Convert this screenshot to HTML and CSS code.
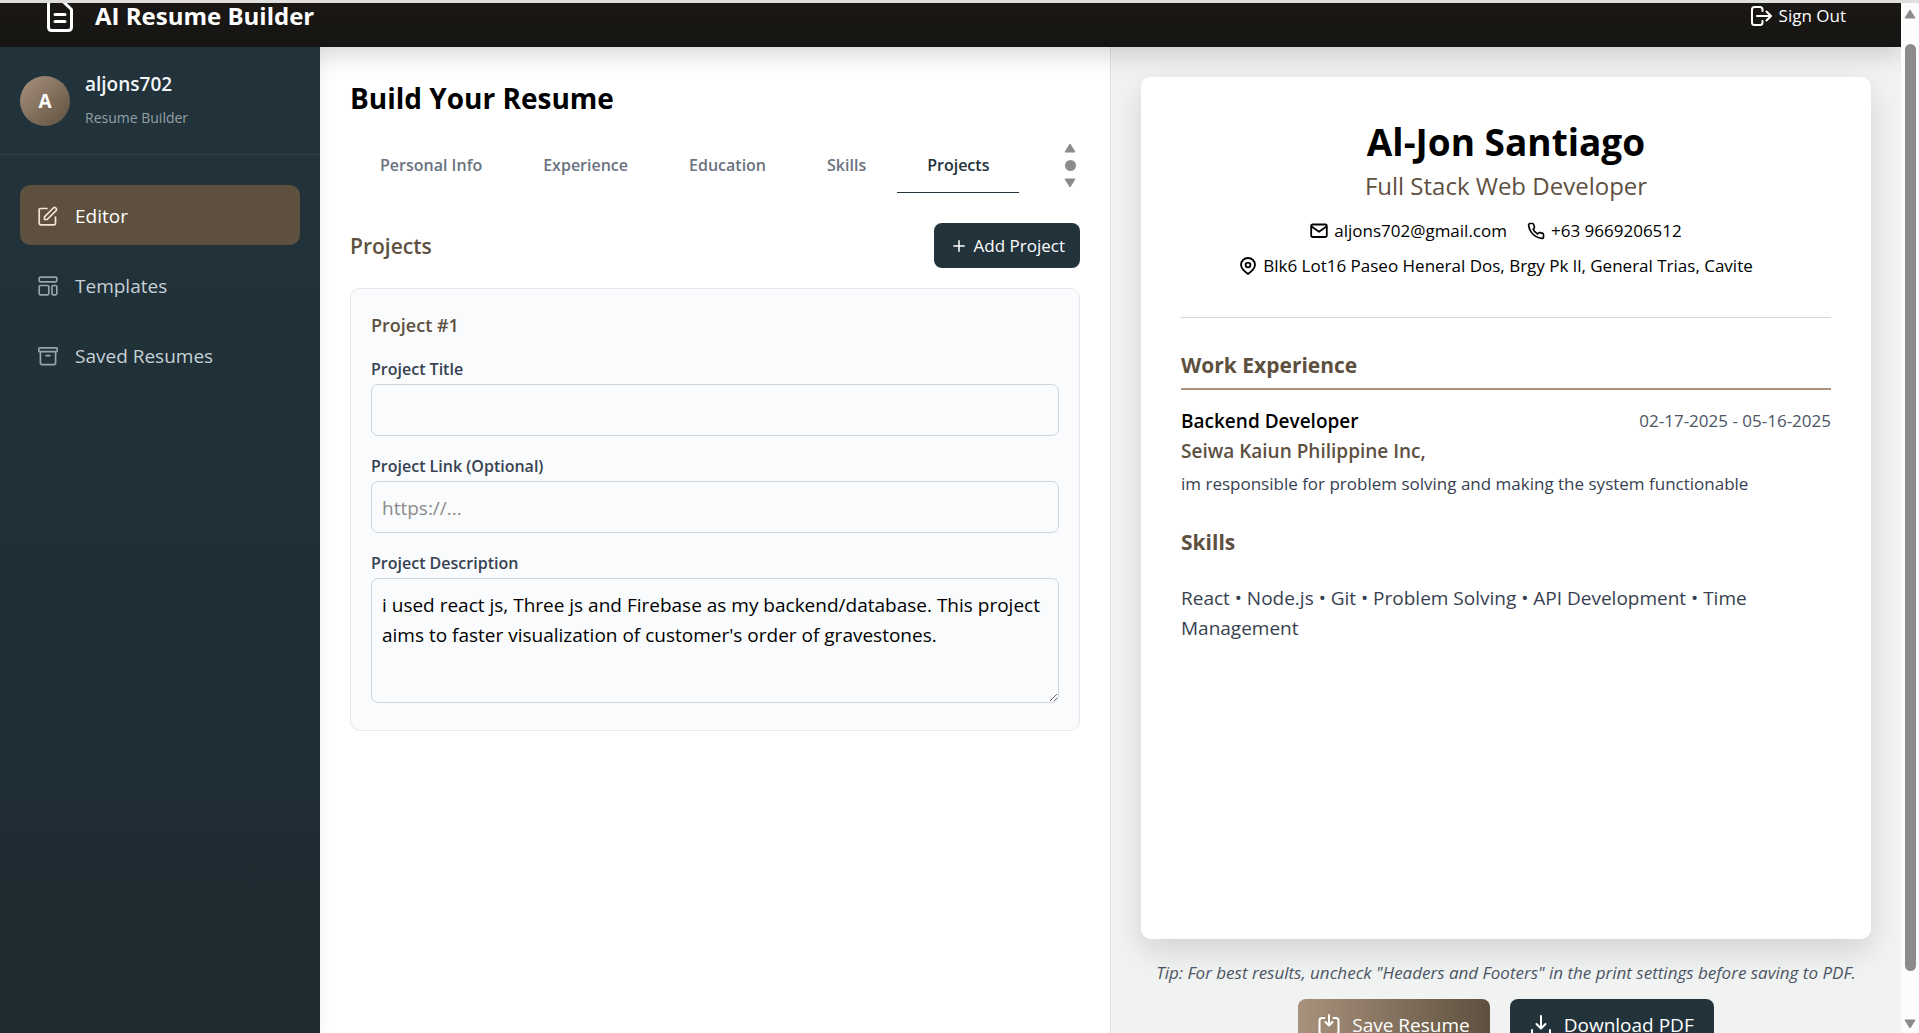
FILE: index.html
```html
<!DOCTYPE html>
<html lang="en">
<head>
<meta charset="utf-8">
<meta name="viewport" content="width=device-width, initial-scale=1">
<title>AI Resume Builder</title>
<link rel="stylesheet" href="styles.css">
</head>
<body>
<div class="window">
  <div class="app">
    <header class="topbar">
      <div class="brand">
        <svg class="brand-icon" viewBox="0 0 28 36" fill="none" stroke="currentColor" stroke-width="3" stroke-linecap="round" stroke-linejoin="round"><path d="M5 3H16.500L25.500 11.500V29Q25.500 32.500 22 32.500H5.500Q2.500 32.500 2.500 29V6Q2.500 3 5 3Z"/><path d="M9 16.500H19M9 23.500H19"/></svg>
        <span class="brand-name">AI Resume Builder</span>
      </div>
      <button class="signout" type="button">
        <svg class="icon-md" viewBox="0 0 22 22" fill="none" stroke="currentColor" stroke-width="2" stroke-linecap="round" stroke-linejoin="round"><path d="M12.500 6V4.500Q12.500 2 10 2H4.500Q2 2 2 4.500V17.500Q2 20 4.500 20H10Q12.500 20 12.500 17.500V16"/><path d="M7 11H20.500M16.500 6.500L21 11L16.500 15.500"/></svg>
        Sign Out
      </button>
    </header>

    <div class="workspace">
      <aside class="sidebar">
        <div class="profile">
          <div class="avatar">A</div>
          <div class="profile-text">
            <span class="profile-name">aljons702</span>
            <span class="profile-role">Resume Builder</span>
          </div>
        </div>
        <nav class="nav">
          <a class="nav-item active" href="#editor">
            <svg class="icon-md" viewBox="0 0 20 20" fill="none" stroke="currentColor" stroke-width="1.700" stroke-linecap="round" stroke-linejoin="round"><path d="M9 2.500H2.500Q1.200 2.500 1.200 4V17Q1.200 18.800 3 18.800H16Q17.500 18.800 17.500 17V11"/><path d="M6.500 13.500V10.800L15.300 2Q16.500 .8 17.800 2Q19.200 3.300 18 4.600L9.200 13.500Z"/></svg>
            Editor
          </a>
          <a class="nav-item" href="#templates">
            <svg class="icon-md" viewBox="0 0 20 20" fill="none" stroke="currentColor" stroke-width="1.700" stroke-linejoin="round"><rect x="1.200" y="1.200" width="17.600" height="4.600" rx="1.200"/><rect x="1.200" y="9.500" width="9.600" height="9.300" rx="1.200"/><rect x="14" y="9.500" width="4.800" height="9.300" rx="1.200"/></svg>
            Templates
          </a>
          <a class="nav-item" href="#saved">
            <svg class="icon-md" viewBox="0 0 20 20" fill="none" stroke="currentColor" stroke-width="1.700" stroke-linecap="round" stroke-linejoin="round"><rect x=".8" y="1.800" width="18.400" height="3.800" rx="1"/><path d="M2.400 5.600V17Q2.400 18.600 4 18.600H16Q17.600 18.600 17.600 17V5.600M8 9.600H12"/></svg>
            Saved Resumes
          </a>
        </nav>
      </aside>

      <main class="editor">
        <h1 class="editor-title">Build Your Resume</h1>
        <div class="tabs-row">
          <div class="tabs" role="tablist">
            <button class="tab" type="button" role="tab">Personal Info</button>
            <button class="tab" type="button" role="tab">Experience</button>
            <button class="tab" type="button" role="tab">Education</button>
            <button class="tab" type="button" role="tab">Skills</button>
            <button class="tab selected" type="button" role="tab" aria-selected="true">Projects</button>
          </div>
          <div class="mini-scroll">
            <svg class="arrow" viewBox="0 0 12 10"><path d="M6 1L11 9H1Z"/></svg>
            <span class="mini-thumb"></span>
            <svg class="arrow" viewBox="0 0 12 10"><path d="M6 9L11 1H1Z"/></svg>
          </div>
        </div>
        <div class="section-head">
          <h2 class="section-title">Projects</h2>
          <button class="btn btn-add" type="button">
            <svg class="icon-plus" viewBox="0 0 12 12" fill="none" stroke="currentColor" stroke-width="1.500" stroke-linecap="round"><path d="M6 .8V11.200M.8 6H11.200"/></svg>
            Add Project
          </button>
        </div>
        <form class="project">
          <h3 class="project-title">Project #1</h3>
          <div class="field">
            <label for="title">Project Title</label>
            <input id="title" type="text">
          </div>
          <div class="field">
            <label for="link">Project Link (Optional)</label>
            <input id="link" type="text" placeholder="https://...">
          </div>
          <div class="field">
            <label for="description">Project Description</label>
            <textarea id="description">i used react js, Three js and Firebase as my backend/database. This project aims to faster visualization of customer's order of gravestones.</textarea>
          </div>
        </form>
      </main>

      <section class="preview">
        <article class="resume">
          <header class="resume-head">
            <h2 class="resume-name">Al-Jon Santiago</h2>
            <p class="resume-role">Full Stack Web Developer</p>
            <ul class="contacts">
              <li><svg class="icon-sm" viewBox="0 0 18 18" fill="none" stroke="currentColor" stroke-width="1.800" stroke-linecap="round" stroke-linejoin="round"><rect x="1.200" y="2.500" width="15.600" height="12.500" rx="1.500"/><path d="M1.500 4.500L9 9.800L16.500 4.500"/></svg>aljons702@gmail.com</li>
              <li><svg class="icon-sm" viewBox="0 0 24 24" fill="none" stroke="currentColor" stroke-width="2.200" stroke-linecap="round" stroke-linejoin="round"><path d="M22 16.920v3a2 2 0 0 1-2.180 2 19.790 19.790 0 0 1-8.630-3.070 19.500 19.500 0 0 1-6-6 19.790 19.790 0 0 1-3.070-8.670A2 2 0 0 1 4.110 2h3a2 2 0 0 1 2 1.720c.13.96.36 1.900.7 2.810a2 2 0 0 1-.45 2.110L8.090 9.910a16 16 0 0 0 6 6l1.270-1.270a2 2 0 0 1 2.110-.45c.91.34 1.850.57 2.810.7A2 2 0 0 1 22 16.920z"/></svg>+63 9669206512</li>
              <li><svg class="icon-sm" viewBox="0 0 18 18" fill="none" stroke="currentColor" stroke-width="1.800" stroke-linejoin="round"><path d="M9 17C5.500 14.500 2 11.500 2 7.800A7 6.800 0 0 1 16 7.800C16 11.500 12.500 14.500 9 17Z"/><circle cx="9" cy="8" r="2.400"/></svg>Blk6 Lot16 Paseo Heneral Dos, Brgy Pk ll, General Trias, Cavite</li>
            </ul>
          </header>
          <section class="work">
            <h3 class="resume-heading ruled">Work Experience</h3>
            <div class="job-line">
              <h4 class="job-title">Backend Developer</h4>
              <span class="job-dates">02-17-2025 - 05-16-2025</span>
            </div>
            <p class="job-company">Seiwa Kaiun Philippine Inc,</p>
            <p class="job-text">im responsible for problem solving and making the system functionable</p>
          </section>
          <section>
            <h3 class="resume-heading">Skills</h3>
            <p class="skills">React • Node.js • Git • Problem Solving • API Development • Time Management</p>
          </section>
        </article>
        <p class="tip">Tip: For best results, uncheck "Headers and Footers" in the print settings before saving to PDF.</p>
        <div class="actions">
          <button class="btn btn-save" type="button">
            <svg class="icon-lg" viewBox="0 0 22 22" fill="none" stroke="currentColor" stroke-width="2" stroke-linecap="round" stroke-linejoin="round"><path d="M6.500 4H4Q1.500 4 1.500 6.500V17.500Q1.500 20 4 20H18Q20.500 20 20.500 17.500V6.500Q20.500 4 18 4H15.500M11 1V11.500M7.500 8L11 11.500L14.500 8"/></svg>
            Save Resume
          </button>
          <button class="btn btn-download" type="button">
            <svg class="icon-lg" viewBox="0 0 22 22" fill="none" stroke="currentColor" stroke-width="2" stroke-linecap="round" stroke-linejoin="round"><path d="M11 2V14.500M6.500 10L11 14.500L15.500 10M2 16V18Q2 20.500 4.500 20.500H17.500Q20 20.500 20 18V16"/></svg>
            Download PDF
          </button>
        </div>
      </section>
    </div>
  </div>
  <div class="scrollbar">
    <svg class="arrow" viewBox="0 0 12 10"><path d="M6 1L11 9H1Z"/></svg>
    <span class="thumb"></span>
    <svg class="arrow" viewBox="0 0 12 10"><path d="M6 9L11 1H1Z"/></svg>
  </div>
</div>
</body>
</html>
```
FILE: styles.css
```css
* { box-sizing: border-box; }

body, h1, h2, h3, h4, p, ul { margin: 0; padding: 0; }

body {
  font-family: "Open Sans", "Noto Sans", sans-serif;
  font-size: 19px;
  line-height: 30px;
  color: #000;
  background: #fff;
}

button, input, textarea { font: inherit; color: inherit; }
button { border: 0; background: none; padding: 0; cursor: pointer; }
svg { flex: none; display: block; }

.window {
  display: flex;
  height: 100vh;
  overflow: hidden;
  border-top: 3px solid #dededc;
}

.app {
  flex: 1;
  min-width: 0;
  display: flex;
  flex-direction: column;
}

/* Top bar */
.topbar {
  flex: none;
  height: 44px;
  z-index: 1;
  padding: 0 55px 13px 46px;
  display: flex;
  align-items: flex-end;
  justify-content: space-between;
  color: #fff;
  background: linear-gradient(#1a1714, #171614);
  box-shadow: 0 8px 24px rgba(0, 0, 0, 0.16);
  clip-path: inset(0 0 -40px 0);
}

.brand { display: flex; align-items: center; gap: 21px; height: 36px; }
.brand-icon { width: 28px; height: 36px; }
.brand-name { font-size: 24px; font-weight: 700; line-height: 26px; }
.signout { display: flex; align-items: center; gap: 7px; font-size: 17px; line-height: 36px; }

.icon-sm { width: 18px; height: 18px; }
.icon-md { width: 20px; height: 20px; }
.icon-lg { width: 22px; height: 22px; }

.signout .icon-md { width: 22px; height: 22px; }

.workspace { flex: 1; min-height: 0; display: flex; }

/* Sidebar */
.sidebar {
  flex: none;
  width: 320px;
  z-index: 2;
  color: #c5d0d6;
  background: linear-gradient(#22333b, #1e2b31);
  box-shadow: 0 0 20px rgba(0, 0, 0, 0.06);
}

.profile {
  display: flex;
  align-items: center;
  gap: 15px;
  height: 108px;
  padding: 0 20px;
  border-bottom: 1px solid #2f4047;
}

.avatar {
  width: 50px;
  height: 50px;
  border-radius: 50%;
  font-weight: 700;
  line-height: 50px;
  text-align: center;
  color: #fff;
  background: linear-gradient(135deg, #a9927d, #5e503f);
}

.profile-text { display: flex; flex-direction: column; gap: 4px; }
.profile-name { font-weight: 600; color: #f2f7fa; }
.profile-role { font-size: 14px; color: #93a0a7; }

.nav { display: flex; flex-direction: column; gap: 10px; padding: 30px 20px; }

.nav-item {
  display: flex;
  align-items: center;
  gap: 17px;
  padding: 16px 18px 14px;
  border-radius: 10px;
  color: inherit;
  text-decoration: none;
}

.nav-item .icon-md { color: #94a5ad; }
.nav-item.active { color: #fff; background: #5e503f; }
.nav-item.active .icon-md { color: #f2e3d3; }

/* Editor */
.editor { flex: 1; min-width: 0; padding: 30px; }
.editor-title { font-size: 28px; font-weight: 700; line-height: 42px; }

.tabs-row { display: flex; align-items: center; justify-content: space-between; margin-top: 19px; }
.tabs { display: flex; gap: 1px; }

.tab {
  height: 55px;
  padding: 0 30px;
  font-size: 16px;
  font-weight: 600;
  color: #6b7280;
  border-bottom: 1px solid transparent;
}

.tab.selected { color: #22333b; border-bottom-color: #22333b; }

.mini-scroll { display: flex; flex-direction: column; align-items: center; gap: 7px; padding-right: 4px; }
.mini-thumb { width: 11px; height: 11px; border-radius: 50%; background: #8b8b8b; }
.arrow { width: 12px; height: 10px; fill: #8b8b8b; stroke: #8b8b8b; stroke-width: 1px; stroke-linejoin: round; }

.section-head { display: flex; align-items: center; justify-content: space-between; margin-top: 30px; }
.section-title { font-size: 21px; font-weight: 600; color: #5e503f; }

.btn { display: flex; align-items: center; border-radius: 8px; color: #fff; }
.btn-add { height: 45px; gap: 9px; padding: 0 15px 0 19px; font-size: 17px; background: #22333b; }
.icon-plus { width: 12px; height: 12px; }

.project {
  display: flex;
  flex-direction: column;
  margin-top: 20px;
  padding: 22px 20px 27px;
  gap: 15px;
  border: 1px solid #e5e7eb;
  border-radius: 10px;
  background: #f9fbfc;
}

.project-title { font-size: 18px; font-weight: 600; line-height: 28px; color: #5e503f; }
.field { display: flex; flex-direction: column; }
.field label { font-size: 16px; font-weight: 600; color: #374151; }

.field input, .field textarea {
  width: 100%;
  padding: 11px 10px 9px;
  border: 1px solid #d1d5db;
  border-radius: 7px;
  background: transparent;
  outline: 0;
}

.field input { height: 52px; }
.field input::placeholder { color: #8b8b8b; }
.field textarea { display: block; height: 125px; resize: vertical; }

/* Preview */
.preview {
  flex: 1;
  min-width: 0;
  padding: 30px 30px 0;
  border-left: 1px solid #e2e5e7;
  background: #f1f3f3;
}

.resume {
  min-height: 862px;
  padding: 40px;
  border-radius: 10px;
  background: #fff;
  box-shadow: 0 12px 30px rgba(0, 0, 0, 0.13);
}

.resume-head { text-align: center; padding-bottom: 36px; border-bottom: 1px solid #d1d5db; }
.resume-name { font-size: 37px; font-weight: 700; line-height: 50px; }
.resume-role { font-size: 24px; line-height: 38px; color: #5e503f; }
.contacts { display: flex; flex-wrap: wrap; justify-content: center; row-gap: 5px; margin-top: 11px; list-style: none; font-size: 17px; }
.contacts li { display: flex; align-items: center; gap: 6px; margin-right: 20px; }
.resume-heading { font-size: 21px; font-weight: 700; line-height: 35px; color: #5e503f; }
.resume-heading.ruled { padding-bottom: 5px; border-bottom: 2px solid #a9927d; }
.work { margin: 30px 0 26px; }
.job-line { display: flex; align-items: center; justify-content: space-between; margin-top: 16px; }
.job-title { font-size: 19px; font-weight: 600; }
.job-dates { font-size: 17px; color: #4b5563; }
.job-company { font-size: 19px; font-weight: 600; color: #5e503f; }
.job-text { margin-top: 3px; font-size: 17px; color: #374151; }
.skills { margin-top: 23px; color: #374151; }

.tip { margin: 19px -20px 11px; font-size: 17px; font-style: italic; text-align: center; white-space: nowrap; color: #4b5563; }
.actions { display: flex; justify-content: center; gap: 20px; }
.actions .btn { height: 52px; gap: 12px; padding: 0 20px; }
.btn-save { background: linear-gradient(90deg, #a9927d, #5e503f); }
.btn-download { background: #22333b; }

/* Window scrollbar */
.scrollbar {
  flex: none;
  width: 18px;
  display: flex;
  flex-direction: column;
  align-items: center;
  padding: 6px 0 4px;
  background: #fcfcfc;
}

.thumb { flex: 1; width: 11px; margin: 25px 0 48px; border-radius: 6px; background: #8b8b8b; }
```
